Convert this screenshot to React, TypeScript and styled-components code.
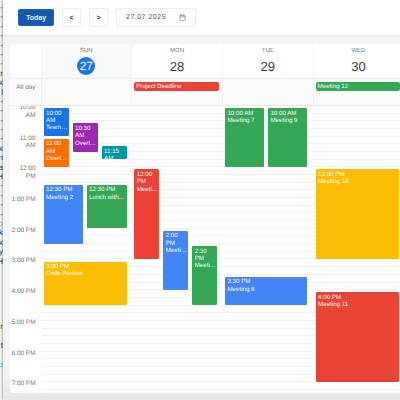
import { createGlobalStyle, styled } from 'styled-components';
import { Calendar } from 'lucide-react';

const HOUR = 30.7;
const colors = {
    blue: '#4285f4',
    deep: '#1a73e8',
    orange: '#ff6d00',
    purple: '#9c27b0',
    teal: '#0097a7',
    green: '#34a853',
    yellow: '#fbbc04',
    red: '#ea4335',
};

type Ev = {
    time: string;
    title: string;
    color: string;
    start: number; // hours from 10:00
    hours: number;
    left: number;
    width: number;
};

const days: { name: string; date: number; today?: boolean; events: Ev[] }[] = [
    {
        name: 'SUN',
        date: 27,
        today: true,
        events: [
            { time: '10:00 AM', title: 'Team Standup', color: colors.deep, start: 0, hours: 1, left: 2, width: 27 },
            { time: '11:00 AM', title: 'Overlap A', color: colors.orange, start: 1, hours: 1, left: 2, width: 27 },
            { time: '10:30 AM', title: 'Overlap B', color: colors.purple, start: 0.5, hours: 1, left: 31, width: 27 },
            { time: '11:15 AM', title: 'Overlap C', color: colors.teal, start: 1.25, hours: 0.5, left: 60, width: 27 },
            { time: '12:30 PM', title: 'Meeting 2', color: colors.blue, start: 2.5, hours: 2, left: 2, width: 41 },
            { time: '12:30 PM', title: 'Lunch with client', color: colors.green, start: 2.5, hours: 1.5, left: 45, width: 42 },
            { time: '3:00 PM', title: 'Code Review', color: colors.yellow, start: 5, hours: 1.5, left: 2, width: 85 },
        ],
    },
    {
        name: 'MON',
        date: 28,
        events: [
            { time: '12:00 PM', title: 'Meeting 3', color: colors.red, start: 2, hours: 3, left: 2, width: 27 },
            { time: '2:00 PM', title: 'Meeting 4', color: colors.blue, start: 4, hours: 2, left: 31, width: 27 },
            { time: '2:30 PM', title: 'Meeting 5', color: colors.green, start: 4.5, hours: 2, left: 60, width: 27 },
        ],
    },
    {
        name: 'TUE',
        date: 29,
        events: [
            { time: '10:00 AM', title: 'Meeting 7', color: colors.green, start: 0, hours: 2, left: 2, width: 41 },
            { time: '10:00 AM', title: 'Meeting 9', color: colors.green, start: 0, hours: 2, left: 45, width: 41 },
            { time: '3:30 PM', title: 'Meeting 8', color: colors.blue, start: 5.5, hours: 1, left: 2, width: 84 },
        ],
    },
    {
        name: 'WED',
        date: 30,
        events: [
            { time: '12:00 PM', title: 'Meeting 10', color: colors.yellow, start: 2, hours: 3, left: 2, width: 85 },
            { time: '4:00 PM', title: 'Meeting 11', color: colors.red, start: 6, hours: 3, left: 2, width: 85 },
        ],
    },
];

const hours = ['9:00 AM', '10:00 AM', '11:00 AM', '12:00 PM', '1:00 PM', '2:00 PM', '3:00 PM', '4:00 PM', '5:00 PM', '6:00 PM', '7:00 PM'];

const behind = ['-', '-', '-', '-', '-', '-', '-', 'r', 'x', 'l', '-', '-', '-', '-', '-', 'x', 'n', 'a', 'H', '-', '-', '-', '-', '-', 'k', 'x', 'y', 'H', '', '', '', '', '', '', 'r', '', 't', '', '', '', ''];
const tints: Record<number, string> = { 23: '#c9b458', 38: '#4fc3d0' };

export default function App() {
    return (
        <>
            <GlobalStyle />
            <Page>
                <Behind>
                    {behind.map((c, i) => (
                        <BehindLine key={i} $color={tints[i]}>
                            {tints[i] ? 'o' : c}
                        </BehindLine>
                    ))}
                </Behind>
                <Modal>
                    <Toolbar>
                        <TodayButton>Today</TodayButton>
                        <NavButton>&lt;</NavButton>
                        <NavButton>&gt;</NavButton>
                        <DateField>
                            27.07.2025
                            <Calendar size={7} strokeWidth={1.6} />
                        </DateField>
                    </Toolbar>
                    <Body>
                        <Card>
                            <HeadRow>
                                <Corner />
                                {days.map(d => (
                                    <DayHead key={d.name} $today={d.today}>
                                        <DayName>{d.name}</DayName>
                                        <DayDate $today={d.today}>{d.date}</DayDate>
                                    </DayHead>
                                ))}
                            </HeadRow>
                            <AllDayRow>
                                <AllDayLabel>All day</AllDayLabel>
                                <AllDayCell />
                                <AllDayCell>
                                    <AllDayEvent $color={colors.red}>Project Deadline</AllDayEvent>
                                </AllDayCell>
                                <AllDayCell />
                                <AllDayCell>
                                    <AllDayEvent $color={colors.green}>Meeting 12</AllDayEvent>
                                </AllDayCell>
                            </AllDayRow>
                            <TimeGrid>
                                <Gutter>
                                    {hours.map(h => (
                                        <HourLabel key={h}>{h}</HourLabel>
                                    ))}
                                </Gutter>
                                {days.map(d => (
                                    <DayColumn key={d.name}>
                                        {d.events.map(e => (
                                            <EventCard
                                                key={e.time + e.title}
                                                $color={e.color}
                                                $top={e.start * HOUR + 1}
                                                $height={e.hours * HOUR - 0.5}
                                                $left={e.left}
                                                $width={e.width}
                                            >
                                                <EventTime>{e.time}</EventTime>
                                                <EventTitle>{e.title}</EventTitle>
                                            </EventCard>
                                        ))}
                                    </DayColumn>
                                ))}
                            </TimeGrid>
                        </Card>
                    </Body>
                </Modal>
            </Page>
        </>
    );
}

const GlobalStyle = createGlobalStyle`
    html, body {
        margin: 0;
        padding: 0;
        width: 400px;
        height: 400px;
        overflow: hidden;
        background: #fff;
    }
    * {
        box-sizing: border-box;
    }
`;

const Page = styled.div`
    display: flex;
    width: 400px;
    height: 400px;
    overflow: hidden;
    font-family: 'Liberation Sans', Arial, sans-serif;
    text-rendering: geometricPrecision;
`;

const Behind = styled.div`
    flex: 0 0 3px;
    padding-top: 3px;
    overflow: hidden;
    background: #fbfbfb;
    direction: rtl;
`;

const BehindLine = styled.div<{ $color?: string }>`
    height: 9.4px;
    font-size: 8px;
    line-height: 9.4px;
    color: ${p => p.$color || '#333'};
`;

const Modal = styled.div`
    flex: 1;
    min-width: 0;
    display: flex;
    flex-direction: column;
    background: #fff;
    box-shadow: -1px 0 2px rgba(0, 0, 0, 0.35);
`;

const Toolbar = styled.div`
    flex: 0 0 35px;
    display: flex;
    align-items: center;
    gap: 8px;
    padding: 0 0 0 15px;
    background: #fff;
    box-shadow: 0 1px 3px rgba(0, 0, 0, 0.08);
    position: relative;
`;

const TodayButton = styled.button`
    width: 36px;
    height: 17px;
    padding: 0;
    border: 1px solid #1a5fc0;
    border-radius: 2px;
    background: #1558b0;
    color: #e8f0fb;
    font: 700 7px 'Liberation Sans', sans-serif;
`;

const NavButton = styled.button`
    width: 19px;
    height: 19px;
    padding: 0;
    border: 1px solid #ededed;
    border-radius: 2px;
    background: #fff;
    color: #333;
    font: 700 7px 'Liberation Sans', sans-serif;
`;

const DateField = styled.div`
    width: 80px;
    height: 19px;
    display: flex;
    align-items: center;
    justify-content: space-between;
    padding: 0 9px;
    border: 1px solid #ededed;
    border-radius: 2px;
    color: #555;
    font-size: 7px;
    letter-spacing: 0.5px;
`;

const Body = styled.div`
    flex: 1;
    min-height: 0;
    padding: 9px 0 7px 7px;
    background: linear-gradient(#f4f4f4 92%, #e6e6e6);
`;

const Card = styled.div`
    width: 420px;
    height: 100%;
    display: flex;
    flex-direction: column;
    overflow: hidden;
    border-radius: 4px 0 0 4px;
    background: #fff;
`;

const HeadRow = styled.div`
    flex: 0 0 35px;
    display: grid;
    grid-template-columns: 30.5px repeat(4, 90.7px);
    border-bottom: 1px solid #eee;
`;

const Corner = styled.div`
    background: #fff;
`;

const DayHead = styled.div<{ $today?: boolean }>`
    display: flex;
    flex-direction: column;
    align-items: center;
    padding-top: 3px;
    border-left: 1px solid #f4f4f4;
    background: ${p => (p.$today ? '#f8f9fa' : '#fff')};
`;

const DayName = styled.div`
    height: 10px;
    font-size: 6px;
    line-height: 9px;
    color: #70757a;
`;

const DayDate = styled.div<{ $today?: boolean }>`
    width: 18px;
    height: 18px;
    display: flex;
    align-items: center;
    justify-content: center;
    border-radius: 50%;
    font-size: ${p => (p.$today ? '12px' : '13px')};
    color: ${p => (p.$today ? '#fff' : '#3c4043')};
    background: ${p => (p.$today ? '#1a73e8' : 'transparent')};
`;

const AllDayRow = styled.div`
    flex: 0 0 27px;
    display: grid;
    grid-template-columns: 30.5px repeat(4, 90.7px);
    background: #fafafa;
    border-bottom: 1px solid #e9e9e9;
`;

const AllDayLabel = styled.div`
    padding: 3px 5px 0 0;
    text-align: right;
    font-size: 6.4px;
    line-height: 11px;
    color: #70757a;
`;

const AllDayCell = styled.div`
    padding: 3px 3px 0 2px;
    border-left: 1px solid #f1f1f1;
`;

const AllDayEvent = styled.div<{ $color: string }>`
    height: 9px;
    padding-left: 2px;
    border-radius: 2px;
    background: ${p => p.$color};
    color: #fff;
    font-size: 6.2px;
    line-height: 9px;
    white-space: nowrap;
`;

const TimeGrid = styled.div`
    flex: 1;
    min-height: 0;
    display: grid;
    grid-template-columns: 30.5px repeat(4, 90.7px);
    overflow: hidden;
`;

const Gutter = styled.div`
    margin-top: -${HOUR + 2}px;
`;

const HourLabel = styled.div`
    height: ${HOUR}px;
    padding: 0 5px 0 0;
    text-align: right;
    font-size: 6.45px;
    line-height: 7.5px;
    color: #70757a;
`;

const DayColumn = styled.div`
    position: relative;
    background: repeating-linear-gradient(#fff 0, #fff 6.675px, #f2f2f2 6.675px, #f2f2f2 7.675px);
`;

const EventCard = styled.div<{ $color: string; $top: number; $height: number; $left: number; $width: number }>`
    position: absolute;
    top: ${p => p.$top}px;
    left: ${p => p.$left}px;
    width: ${p => p.$width}px;
    height: ${p => p.$height}px;
    padding: 1.5px 1px 1.5px 2.5px;
    overflow: hidden;
    border: 0.5px solid rgba(255, 255, 255, 0.35);
    border-radius: 2px;
    background: ${p => p.$color};
    background-clip: padding-box;
    color: #fff;
    font-size: 6.2px;
    line-height: 7.4px;
`;

const EventTime = styled.div`
    padding-right: 1.5px;
`;

const EventTitle = styled.div`
    white-space: nowrap;
    overflow: hidden;
    text-overflow: ellipsis;
`;
